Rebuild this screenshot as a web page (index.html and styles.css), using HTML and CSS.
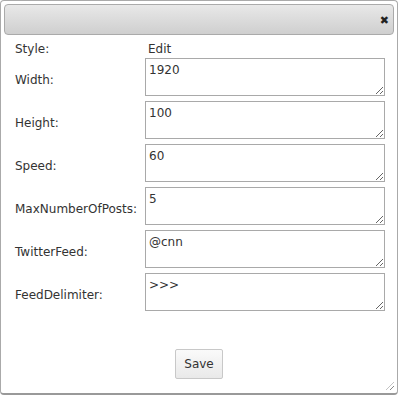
FILE: index.html
```html
<!DOCTYPE html>
<html>
<head>
<meta charset="utf-8">
<link rel="stylesheet" href="styles.css">
</head>
<body>
<div class="dialog">
  <div class="titlebar">
    <span class="close">✖</span>
  </div>
  <div class="content">
    <table class="form">
      <tr class="style-row"><td class="lbl">Style:</td><td class="val">Edit</td></tr>
      <tr><td class="lbl">Width:</td><td class="val"><textarea>1920</textarea></td></tr>
      <tr><td class="lbl">Height:</td><td class="val"><textarea>100</textarea></td></tr>
      <tr><td class="lbl">Speed:</td><td class="val"><textarea>60</textarea></td></tr>
      <tr><td class="lbl">MaxNumberOfPosts:</td><td class="val"><textarea>5</textarea></td></tr>
      <tr><td class="lbl">TwitterFeed:</td><td class="val"><textarea>@cnn</textarea></td></tr>
      <tr><td class="lbl">FeedDelimiter:</td><td class="val"><textarea>&gt;&gt;&gt;</textarea></td></tr>
    </table>
    <div class="actions"><button class="save">Save</button></div>
  </div>
  <span class="grip"></span>
</div>
</body>
</html>
```
FILE: styles.css
```css
html, body { margin: 0; padding: 0; background: #fff; }
body { font-family: "DejaVu Sans", Verdana, sans-serif; font-size: 12px; color: #333; }
.dialog {
  position: relative;
  box-sizing: border-box;
  width: 398px;
  height: 395px;
  border: 1px solid #aaa;
  border-bottom: 2px solid #999;
  border-radius: 4px;
  padding: 3px 3px 0;
}
.titlebar {
  height: 29px;
  border: 1px solid #aaa;
  border-radius: 4px;
  background: linear-gradient(#e8e8e8, #cfcfcf);
  display: flex;
  align-items: center;
  justify-content: flex-end;
  padding-right: 4px;
}
.close { font-size: 11px; color: #222; line-height: 1; margin-top: 2px; }
.content { padding: 7px 11px 0; }
.form { border-collapse: collapse; }
.form td { padding: 0 0 5px; }
.lbl { width: 130px; min-width: 130px; box-sizing: border-box; padding-right: 2px !important; vertical-align: middle; padding-top: 6px !important; }
.style-row td { padding-bottom: 2px; padding-top: 0 !important; }
.style-row .val { padding-left: 3px; }
textarea {
  box-sizing: border-box;
  display: block;
  width: 240px;
  height: 38px;
  margin: 0;
  border: 1px solid #a9a9a9;
  padding: 4px 3px 2px;
  font-family: "DejaVu Sans", Verdana, sans-serif;
  font-size: 12px;
  color: #333;
}
.actions { display: flex; justify-content: center; padding-top: 33px; }
.save {
  width: 48px; height: 30px;
  border: 1px solid #c8c8c8;
  border-radius: 2px;
  background: linear-gradient(#fafafa, #e9e9e9);
  font-family: "DejaVu Sans", Verdana, sans-serif;
  font-size: 12px;
  color: #333;
  padding: 0;
}
.grip {
  position: absolute; right: 3px; bottom: 3px;
  width: 8px; height: 8px;
  background: repeating-linear-gradient(135deg, transparent 0 2px, #888 2px 3px);
  clip-path: polygon(100% 0, 100% 100%, 0 100%);
}
```
